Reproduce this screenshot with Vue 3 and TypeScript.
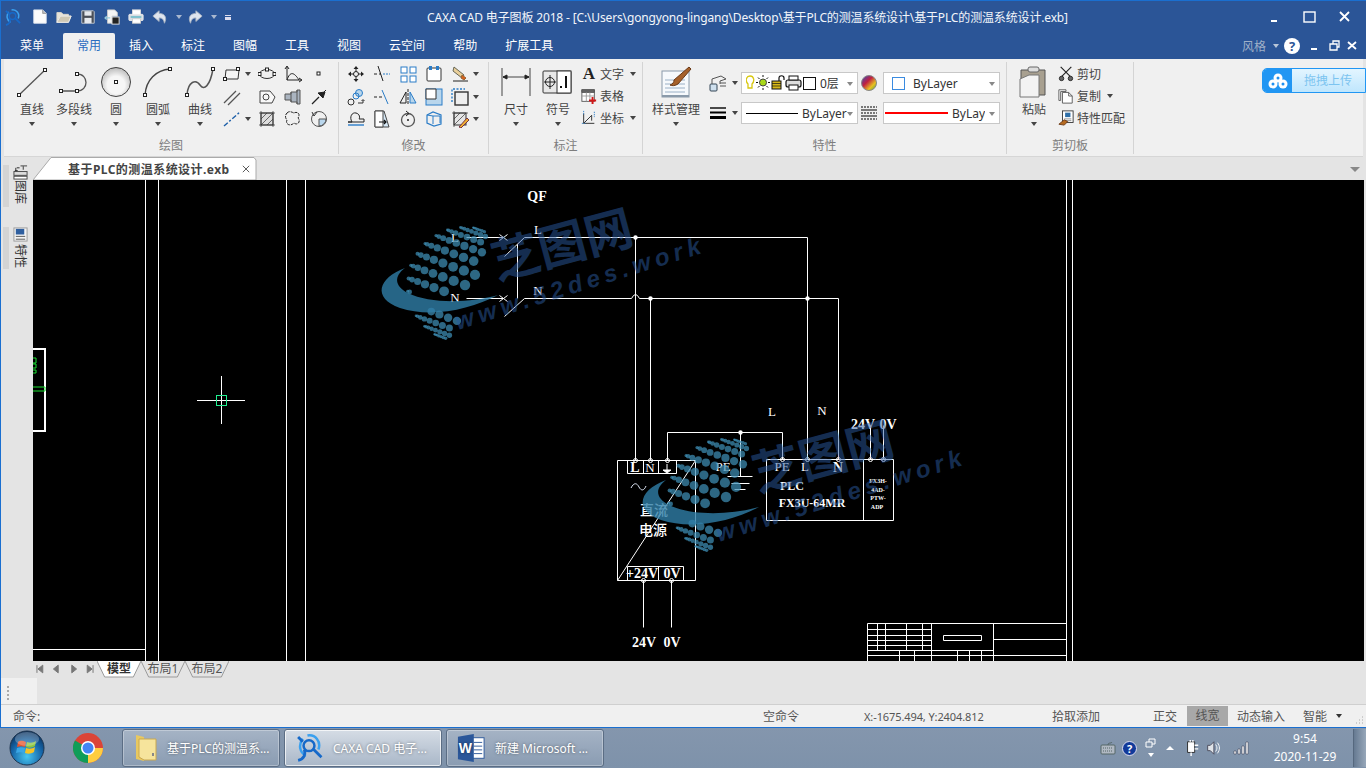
<script setup lang="ts">
const sq = (x: number, y: number) =>
  `<rect x="${x - 1.5}" y="${y - 1.5}" width="3" height="3" fill="#fff" stroke="#222"/>`

const icons: Record<string, string> = {
  // big drawing tools, 32 box
  line: `<path d="M3 29 29 4" stroke="#555" stroke-width="1.3"/>${sq(3, 29)}${sq(29, 4)}`,
  polyline: `<path d="M3 25H19C31 25 31 8 19 8" stroke="#555" stroke-width="1.3"/>${sq(3, 25)}${sq(19, 25)}${sq(19, 8)}`,
  circle: `<defs><radialGradient id="cg" cx=".5" cy=".6" r=".6"><stop offset=".5" stop-color="#f6f6f6"/><stop offset="1" stop-color="#b9b9b9"/></radialGradient></defs><circle cx="16" cy="16" r="14.5" fill="url(#cg)" stroke="#444"/>${sq(16, 16)}`,
  arc: `<path d="M3 29C4 14 14 4 28 3" stroke="#444" stroke-width="1.4"/>${sq(3, 29)}${sq(28, 3)}`,
  curve: `<path d="M3 29C4 15 12 13 16 19S26 20 29 3" stroke="#555" stroke-width="1.5"/>${sq(3, 29)}${sq(29, 3)}`,
  // draw small, 18 box
  rect: `<path d="M3 5H16L15 14H2Z" fill="#f4f4f4" stroke="#333"/>${sq(2, 14)}${sq(15, 4)}`,
  ellipse: `<ellipse cx="9" cy="9" rx="7.5" ry="4.5" stroke="#333"/>${sq(1.5, 9)}${sq(16.5, 9)}${sq(9, 4.5)}`,
  angle: `<path d="M3 2V15H17M3 15C6 6 10 7 15 15" stroke="#222"/><path d="M1 4 3 1 5 4M15 13 18 15 15 17" stroke="#222"/>`,
  point: `<rect x="7" y="7" width="3" height="3" stroke="#222" fill="#fff"/>`,
  parallel: `<path d="M1 15 13 3M5 17 17 5" stroke="#555" stroke-width="1.3"/>`,
  profile: `<path d="M2 3H12L17 9 14 15H2Z" stroke="#444" fill="#f8f8f8"/><circle cx="8" cy="9" r="3" stroke="#444"/>`,
  shaft: `<path d="M1 6H7V4H13V2H16V16H13V14H7V12H1Z" fill="#aab4c0" stroke="#555"/><path d="M13 2V16M7 4V14" stroke="#555"/>`,
  needle: `<path d="M2 16 9 9" stroke="#222" stroke-width="1.2"/><path d="M8 5 13 10 15 4ZM11 7 16 2" fill="#222" stroke="#222"/>`,
  center: `<path d="M1 16 17 2" stroke="#1d5fa8" stroke-width="1.4" stroke-dasharray="5 2 2 2"/>`,
  hatch: `<rect x="3" y="3" width="12" height="12" fill="#ddd" stroke="#333"/><path d="M3 9 9 3M3 15 15 3M9 15 15 9M1 3H17M1 15H17M3 1V17M15 1V17" stroke="#333" stroke-width=".7"/>`,
  cloud: `<path d="M3 3C6 0 9 3 10 3 13 1 17 4 14 8 17 11 14 16 10 13 6 17 1 14 3 10 1 8 1 5 3 3Z" stroke="#222" stroke-dasharray="3 1"/>`,
  rotate: `<circle cx="9" cy="9" r="7.5" stroke="#555"/><path d="M9 9V16A7 7 0 0 0 16 9Z" fill="#b9d6ec" stroke="#555"/><path d="M2 2 4 6 7 2" stroke="#333"/>`,
  // modify
  move: `<path d="M9 1 11.5 4H6.5ZM9 17 6.5 14H11.5ZM1 9 4 6.5V11.5ZM17 9 14 6.5V11.5Z" fill="#222" stroke="none"/><circle cx="9" cy="9" r="2.5" stroke="#222"/><path d="M9 4V6.5M9 11.5V14M4 9H6.5M11.5 9H14" stroke="#222"/>`,
  trim: `<path d="M5 1 10 16" stroke="#222"/><path d="M1 9H4M6 9H8" stroke="#222"/><path d="M10 9H17" stroke="#2a7cc7" stroke-dasharray="2 1"/>`,
  array: `<g stroke="#2a7cc7" fill="#fff"><rect x="2" y="2" width="6" height="6"/><rect x="11" y="2" width="6" height="6"/><rect x="2" y="11" width="6" height="6"/><rect x="11" y="11" width="6" height="6"/></g>`,
  stretch: `<rect x="2" y="3" width="14" height="13" rx="1" fill="#fff" stroke="#333"/><rect x="4" y="1" width="3" height="4" fill="#2a7cc7" stroke="none"/><rect x="11" y="1" width="3" height="4" fill="#2a7cc7" stroke="none"/>`,
  erase: `<path d="M2 16H17" stroke="#222"/><path d="M3 2 13 10 11 13 2 6Z" fill="#e9cf9a" stroke="#665"/><path d="M11 10 15 13 13 15 10 13Z" fill="#d9601a" stroke="#963"/>`,
  copyc: `<circle cx="12" cy="5" r="3.5" fill="#b9d6ec" stroke="#2a7cc7"/><circle cx="9" cy="8" r="3" stroke="#2a7cc7"/><circle cx="4" cy="14" r="3" stroke="#333"/><path d="M11 15H16V12M14.5 13 16 11.5 17.5 13" stroke="#333"/>`,
  extend: `<path d="M1 9H4M6 9H9" stroke="#222"/><path d="M9 2 15 16" stroke="#2a7cc7"/>`,
  mirror: `<path d="M9 1V17" stroke="#222" stroke-dasharray="3 1"/><path d="M7 4V15H1Z" stroke="#222"/><path d="M11 4V15H17Z" fill="#b9d6ec" stroke="#2a7cc7"/>`,
  fillet: `<rect x="1" y="1" width="16" height="16" fill="#b9d6ec" stroke="#2a7cc7"/><path d="M1 1H11V11H1Z" fill="#fff" stroke="#333"/>`,
  dashrect: `<rect x="4" y="4" width="13" height="13" fill="#eee" stroke="#333" stroke-width="1.4"/><path d="M1 14V1H14" stroke="#2a7cc7" stroke-width="1.4" stroke-dasharray="2 1.5"/>`,
  bump: `<path d="M1 12H5C2 7 5 2 9 3 13 4 13 8 12 9H17V12Z" stroke="#222"/><path d="M1 15H17" stroke="#2a7cc7" stroke-width="1.4"/>`,
  brk: `<path d="M2 1H11L16 17H2Z" fill="#d6e8f6" stroke="#444"/><path d="M2 1H10V17H2Z" fill="#fff" stroke="#444"/><path d="M6 12H13M11 10 13 12 11 14" stroke="#111" stroke-width="1.2"/>`,
  turn: `<circle cx="9" cy="10" r="6.5" stroke="#555" stroke-width="1.3"/><circle cx="9" cy="10" r="1" fill="#222"/><path d="M7 1 10 3.5 7 6" stroke="#222"/>`,
  box3d: `<path d="M2 5 8 2 16 5V14L9 16 2 13Z" stroke="#2a7cc7" stroke-width="1.2"/><path d="M8 6H15V13M8 6V14M2 5 8 6" stroke="#2a7cc7"/>`,
  hatchp: `<rect x="3" y="3" width="12" height="12" fill="#e5e5e5" stroke="#333"/><path d="M3 9 9 3M3 15 15 3M1 3H17M3 1V17" stroke="#333" stroke-width=".7"/><path d="M8 17 16 8 18 10 10 18Z" fill="#f0b030" stroke="#734"/>`,
  // annotation
  dim: `<path d="M2 2V30M30 2V30M3 11H29" stroke="#444"/><path d="M3 11 7 9V13ZM29 11 25 9V13Z" fill="#222" stroke="#222"/>`,
  symbol: `<rect x="1" y="5" width="28" height="22" rx="1" fill="#e8e8e8" stroke="#333"/><rect x="15" y="5" width="14" height="22" fill="#fff" stroke="#333"/><circle cx="8" cy="16" r="4.5" stroke="#222"/><path d="M8 9V23M2 16H14" stroke="#222"/><rect x="18" y="20" width="2" height="2" fill="#111" stroke="none"/><path d="M24 10V22" stroke="#111" stroke-width="2"/>`,
  table: `<rect x="1" y="2" width="14" height="13" fill="#fff" stroke="#555"/><path d="M1 2H15V5H1Z" fill="#666" stroke="#555"/><path d="M1 9H15M6 5V15M10 5V15" stroke="#999"/><path d="M9 14H17M13 10V18" stroke="#d01818" stroke-width="2.2"/>`,
  coord: `<path d="M3 4V15H15M3 15 12 6M12 6V12" stroke="#222"/><g stroke="#2a7cc7" stroke-dasharray="1.5 1"><path d="M3 1V6M15 2V8M1 15H5"/></g>`,
  // properties
  style: `<rect x="2" y="5" width="27" height="26" fill="#f6f9fc" stroke="#8a9aaa"/><path d="M5 14H25M5 18H25M5 22H25M5 26H25" stroke="#9ab0c6"/><path d="M2 30H29" stroke="#8a9aaa" stroke-width="2"/><path d="M14 14 29 1 31 3 18 18C15 20 12 20 10 19 13 18 14 16 14 14Z" fill="#a5602a" stroke="#6a3a18"/>`,
  layer: `<rect x="1" y="10" width="7" height="7" rx="1" fill="#cfe0ee" stroke="#345"/><path d="M3 10V5L12 2 17 5 11 7V10M11 9H17M11 12H17" stroke="#555"/>`,
  lwidth: `<path d="M1 4H17" stroke="#000" stroke-width="1.4"/><path d="M1 8.5H17" stroke="#000" stroke-width="2"/><path d="M1 13.5H17" stroke="#000" stroke-width="3"/>`,
  ltype: `<path d="M1 3H17M1 9H17M1 15H17" stroke="#000" stroke-dasharray="2 1"/><path d="M1 6H17M1 12H17" stroke="#000"/>`,
  colors: `<defs><linearGradient id="rb" x1="0" y1="0" x2="1" y2="1"><stop offset="0" stop-color="#3050c8"/><stop offset=".4" stop-color="#c02040"/><stop offset=".7" stop-color="#e8c020"/><stop offset="1" stop-color="#40a040"/></linearGradient></defs><circle cx="9" cy="9" r="7.5" fill="url(#rb)" stroke="#888"/>`,
  // clipboard
  paste: `<path d="M3 4H27V29H3Z" fill="#a8a090" stroke="#555"/><rect x="10" y="1" width="11" height="5" rx="2" fill="#ddd" stroke="#666"/><path d="M2 13 11 9H21V31H2Z" fill="#f3f3f3" stroke="#777"/>`,
  cut: `<path d="M3 1 14 12M15 1 4 12" stroke="#222" stroke-width="1.3"/><circle cx="4" cy="14" r="2.5" fill="#666" stroke="#222"/><circle cx="14" cy="14" r="2.5" fill="#666" stroke="#222"/>`,
  copy: `<path d="M1 2H9V4H3V14H1Z" fill="#fff" stroke="#555"/><path d="M5 5H12L16 9V17H5Z" fill="#fff" stroke="#555"/><path d="M12 5V9H16" stroke="#555"/>`,
  match: `<rect x="5" y="1" width="12" height="13" fill="#fff" stroke="#333"/><rect x="8" y="3" width="6" height="5" fill="#2f6fa8" stroke="none"/><path d="M7 10H15M7 12H15" stroke="#888"/><path d="M1 16 7 11 11 13 7 17Z" fill="#b56a20" stroke="#6a3a18"/>`,
  // quick access, 18 box
  qnew: `<path d="M2 1H12L16 5V16H2Z" fill="#fbfbfb" stroke="#dfe6ef"/><path d="M12 1V5H16" fill="#bbb" stroke="#999"/>`,
  qopen: `<path d="M1 15V4H6L8 6H14V8H5L1 15H14L17 8H14" fill="#e7e3d8" stroke="#dcd8cc"/><path d="M5 8H17L14 15H1Z" fill="#cfc8b4" stroke="#eee"/>`,
  qsave: `<path d="M2 2H15L16 3V16H2Z" fill="#4a4f58" stroke="#c9ced6"/><rect x="5" y="2.5" width="8" height="5" fill="#e6e9ee" stroke="none"/><rect x="5" y="10" width="8" height="6" fill="#e6e9ee" stroke="none"/>`,
  qsaveas: `<path d="M4 1H12L15 4V8H9V16H4Z" fill="#f4f4f4" stroke="#ccc"/><rect x="9" y="9" width="8" height="8" fill="#222" stroke="#eee"/><path d="M1 10H7M3 8 1 10 3 12" stroke="#9cd" stroke-width="1.2"/>`,
  qprint: `<rect x="5" y="1" width="9" height="6" fill="#fff" stroke="#ddd"/><rect x="1" y="6" width="16" height="7" rx="1" fill="#d8dde4" stroke="#eee"/><rect x="5" y="11" width="9" height="5" fill="#fff" stroke="#ccc"/><path d="M3 9H15" stroke="#3ab" stroke-width="1.2"/>`,
  qundo: `<path d="M8 2 1 8 8 14V10C11 10 13 11 14 16 17 10 15 5 8 5Z" fill="#dfe5ee" stroke="#a7b2c2"/>`,
  qredo: `<path d="M10 2 17 8 10 14V10C7 10 5 11 4 16 1 10 3 5 10 5Z" fill="#dfe5ee" stroke="#a7b2c2"/>`,
  caxa: `<path d="M5 3C2 7 3 12 7 14M8 1C13 0 17 5 15 10" stroke="#3aa0ef" stroke-width="1.6"/><circle cx="9" cy="7.500" r="3.500" stroke="#1669c9" stroke-width="1.600"/><path d="M2 2 5 5M12 10 17 15M2 17C6 16 7 13 6 10" stroke="#1669c9" stroke-width="1.800"/>`
}

const bigDraw = [
  { icon: 'line', label: '直线' },
  { icon: 'polyline', label: '多段线' },
  { icon: 'circle', label: '圆' },
  { icon: 'arc', label: '圆弧' },
  { icon: 'curve', label: '曲线' }
]
const drawGrid = [
  { icon: 'rect', caret: true }, { icon: 'ellipse' }, { icon: 'angle' }, { icon: 'point' },
  { icon: 'parallel', caret: false }, { icon: 'profile' }, { icon: 'shaft' }, { icon: 'needle' },
  { icon: 'center', caret: true }, { icon: 'hatch' }, { icon: 'cloud' }, { icon: 'rotate' }
]
const modifyGrid = [
  'move', 'trim', 'array', 'stretch', 'erase',
  'copyc', 'extend', 'mirror', 'fillet', 'dashrect',
  'bump', 'brk', 'turn', 'box3d', 'hatchp'
]
const tabs = ['插入', '标注', '图幅', '工具', '视图', '云空间', '帮助', '扩展工具']
const quick = ['qnew', 'qopen', 'qsave', 'qsaveas', 'qprint']

// two stamped watermarks; the second one is the first shifted
const stamps = [
  { x: 0, y: 0 },
  { x: 261, y: 212 }
]

// left half of a dotted sphere, dots grow towards its middle
interface Dot { x: number; y: number; r: number }
const globe: Dot[] = []
const rad = Math.PI / 180
const tilt = 20 * rad
for (let i = -6; i <= 6; i++) {
  const lat = i * 13 * rad
  for (let j = 0; j < 8; j++) {
    const lon = (-84 + j * 12 + (i % 2 ? 6 : 0)) * rad
    const x0 = 58 * Math.cos(lat) * Math.sin(lon)
    const y0 = 58 * Math.sin(lat)
    const x = 465 + x0 * Math.cos(tilt) - y0 * Math.sin(tilt)
    const y = 285 + x0 * Math.sin(tilt) + y0 * Math.cos(tilt)
    if (y > 292 && y < 311) continue
    if (y >= 311 && x > 458) continue
    const r = 0.8 + 4.4 * Math.cos(lat) * Math.cos(lon * 0.95)
    globe.push({ x: +x.toFixed(1), y: +y.toFixed(1), r: +r.toFixed(1) })
  }
}

// wire runs, all in screen coordinates
const wires = [
  'M466 237H503M466 298H503',
  'M504 256 524 237H807V459M504 316 524 298H631Q635 290 639 298H838V459',
  'M517 244V298M635 237V460M650 298V460',
  'M667 460V432H782V459M740 432V476M727 476H752M731 483H749M734 489H745',
  'M499 234 507 240M507 234 499 240M499 295 507 301M507 295 499 301',
  'M617 460H695V580H617ZM627 460V473H676V460M643 460V473M658 460V473M695 460 617 580',
  'M627 580V566H683V580M658 566V580M643 580V627M671 580V627',
  'M766 459H893V520H766ZM863 459V520M870 459V425M883 459V425'
]
const nodes = [[782, 459], [807, 459], [838, 459], [870, 459], [883, 459], [635, 460], [650, 460], [667, 460], [643, 580], [671, 580]]
const solid = [[635, 237], [650, 298], [807, 298], [740, 432]]
const titleLines = [
  'M867 623H1066V661M867 623V661M931 623V661M993 623V661',
  'M867 629H931M867 635H931M867 640H931M867 645H931M867 650H993M867 655H1066M993 639H1066',
  'M877 623V650M885 623V650M906 623V650M922 623V650M899 650V661M914 650V661M957 650V661M969 650V661M981 650V661',
  'M943 635H981V640H943Z'
]
</script>

<template>
  <div class="screen">
    <div class="window">
      <!-- title bar -->
      <div class="titlebar">
        <div class="quick">
          <svg class="q-app" viewBox="0 0 18 18" fill="none" v-html="icons.caxa"></svg>
          <svg v-for="q in quick" :key="q" class="q-ico" viewBox="0 0 18 18" fill="none" v-html="icons[q]"></svg>
          <svg class="q-ico" viewBox="0 0 18 18" fill="none" v-html="icons.qundo"></svg>
          <i class="caret pale q-caret"></i>
          <svg class="q-ico" viewBox="0 0 18 18" fill="none" v-html="icons.qredo"></svg>
          <i class="caret pale q-caret"></i>
          <span class="q-more"></span>
        </div>
        <div class="title">CAXA CAD 电子图板 2018 - [C:\Users\gongyong-lingang\Desktop\基于PLC的测温系统设计\基于PLC的测温系统设计.exb]</div>
        <div class="winctl">
          <svg viewBox="0 0 35 16"><path d="M14 12H20" stroke="#fff" stroke-width="2"/></svg>
          <svg viewBox="0 0 35 16"><rect x="12" y="3" width="11" height="10" fill="none" stroke="#fff" stroke-width="1.4"/></svg>
          <svg viewBox="0 0 35 16"><path d="M13 3 22 12M22 3 13 12" stroke="#fff" stroke-width="1.8"/></svg>
        </div>
      </div>

      <!-- ribbon tabs -->
      <div class="tabrow">
        <span class="tab first">菜单</span>
        <span class="tab active">常用</span>
        <span v-for="t in tabs" :key="t" class="tab">{{ t }}</span>
        <div class="tabright">
          <span class="style-lbl">风格</span>
          <i class="caret pale2"></i>
          <span class="help">?</span>
          <svg class="mdi" viewBox="0 0 58 14">
            <path d="M4 10H10" stroke="#fff" stroke-width="2"/>
            <path d="M23 5H30V11H23ZM26 5V2H32V8H30" fill="none" stroke="#fff" stroke-width="1.3"/>
            <path d="M41 3 49 10M49 3 41 10" stroke="#fff" stroke-width="1.8"/>
          </svg>
        </div>
      </div>

      <!-- ribbon -->
      <div class="ribbon-wrap">
        <div class="ribbon">
          <section class="group g-draw">
            <div class="g-body">
              <div v-for="b in bigDraw" :key="b.label" class="big">
                <svg class="ico32" viewBox="0 0 32 32" fill="none" v-html="icons[b.icon]"></svg>
                <span class="big-lbl">{{ b.label }}</span>
                <i class="caret"></i>
              </div>
              <div class="grid draw-grid">
                <div v-for="(c, i) in drawGrid" :key="i" class="cell">
                  <svg class="ico18" viewBox="0 0 18 18" fill="none" v-html="icons[c.icon]"></svg>
                  <i v-if="c.caret" class="caret cell-caret"></i>
                </div>
              </div>
            </div>
            <div class="g-name">绘图</div>
          </section>

          <section class="group g-modify">
            <div class="g-body">
              <div class="grid modify-grid">
                <div v-for="m in modifyGrid" :key="m" class="cell center">
                  <svg class="ico18" viewBox="0 0 18 18" fill="none" v-html="icons[m]"></svg>
                </div>
              </div>
              <div class="side-carets">
                <i class="caret"></i><i class="caret"></i><i class="caret"></i>
              </div>
            </div>
            <div class="g-name">修改</div>
          </section>

          <section class="group g-note">
            <div class="g-body">
              <div class="big">
                <svg class="ico32" viewBox="0 0 32 32" fill="none" v-html="icons.dim"></svg>
                <span class="big-lbl">尺寸</span>
                <i class="caret"></i>
              </div>
              <div class="big">
                <svg class="ico32" viewBox="0 0 32 32" fill="none" v-html="icons.symbol"></svg>
                <span class="big-lbl">符号</span>
                <i class="caret"></i>
              </div>
              <div class="mini-list">
                <div class="mini"><span class="glyph-a">A</span><span>文字</span><i class="caret"></i></div>
                <div class="mini"><svg class="ico16" viewBox="0 0 18 18" fill="none" v-html="icons.table"></svg><span>表格</span></div>
                <div class="mini"><svg class="ico16" viewBox="0 0 18 18" fill="none" v-html="icons.coord"></svg><span>坐标</span><i class="caret"></i></div>
              </div>
            </div>
            <div class="g-name">标注</div>
          </section>

          <section class="group g-prop">
            <div class="g-body">
              <div class="big big-style">
                <svg class="ico32" viewBox="0 0 32 32" fill="none" v-html="icons.style"></svg>
                <span class="big-lbl">样式管理</span>
                <i class="caret"></i>
              </div>
              <div class="prop-rows">
                <div class="prop-row">
                  <svg class="ico18" viewBox="0 0 18 18" fill="none" v-html="icons.layer"></svg>
                  <i class="caret"></i>
                  <div class="combo">
                    <svg class="layer-state" viewBox="0 0 56 16" fill="none">
                      <path d="M4 1C0 1-1 6 2 9V13H6V9C9 6 8 1 4 1Z" fill="#fff" stroke="#d8c810" stroke-width="1.300"/>
                      <circle cx="17" cy="7.500" r="3.500" fill="#a8d818" stroke="#444"/>
                      <path d="M17 0V2M17 13V15M10 7.500H12M22 7.500H24M12 2.500 13.500 4M22 2.500 20.500 4M12 12.500 13.500 11M22 12.500 20.500 11" stroke="#111"/>
                      <rect x="26" y="6" width="9" height="8" fill="#d8b818" stroke="#111"/>
                      <path d="M26 8.500H35M26 11H35" stroke="#111" stroke-width=".7"/>
                      <path d="M33 6V3C33 0 38 0 38 3V5" stroke="#111" stroke-width="1.200"/>
                      <rect x="40" y="5" width="15" height="7" rx="2" fill="#ddd" stroke="#111" stroke-width="1.200"/>
                      <rect x="43" y="1" width="9" height="4" fill="#fff" stroke="#111"/>
                      <rect x="43" y="10" width="9" height="5" fill="#fff" stroke="#111"/>
                    </svg>
                    <span class="layer-box"></span>
                    <span class="combo-txt">0层</span>
                    <i class="caret grey combo-caret"></i>
                  </div>
                  <svg class="ico18 prop-sw" viewBox="0 0 18 18" fill="none" v-html="icons.colors"></svg>
                  <div class="combo">
                    <span class="color-box"></span>
                    <span class="combo-txt bylayer">ByLayer</span>
                    <i class="caret grey combo-caret"></i>
                  </div>
                </div>
                <div class="prop-row">
                  <svg class="ico18" viewBox="0 0 18 18" fill="none" v-html="icons.lwidth"></svg>
                  <i class="caret"></i>
                  <div class="combo">
                    <span class="sample"></span>
                    <span class="combo-txt">ByLayer</span>
                    <i class="caret grey combo-caret"></i>
                  </div>
                  <svg class="ico18 prop-sw" viewBox="0 0 18 18" fill="none" v-html="icons.ltype"></svg>
                  <div class="combo">
                    <span class="sample red"></span>
                    <span class="combo-txt cut-off">ByLayer</span>
                    <i class="caret grey combo-caret"></i>
                  </div>
                </div>
              </div>
            </div>
            <div class="g-name">特性</div>
          </section>

          <section class="group g-clip">
            <div class="g-body">
              <div class="big">
                <svg class="ico32" viewBox="0 0 32 32" fill="none" v-html="icons.paste"></svg>
                <span class="big-lbl">粘贴</span>
                <i class="caret"></i>
              </div>
              <div class="mini-list clip-list">
                <div class="mini"><svg class="ico16" viewBox="0 0 18 18" fill="none" v-html="icons.cut"></svg><span>剪切</span></div>
                <div class="mini"><svg class="ico16" viewBox="0 0 18 18" fill="none" v-html="icons.copy"></svg><span>复制</span><i class="caret"></i></div>
                <div class="mini"><svg class="ico16" viewBox="0 0 18 18" fill="none" v-html="icons.match"></svg><span>特性匹配</span></div>
              </div>
            </div>
            <div class="g-name">剪切板</div>
          </section>

          <div class="upload">
            <div class="up-left">
              <svg viewBox="0 0 20 16">
                <circle cx="10" cy="5" r="4.500" fill="#fff"/>
                <circle cx="5" cy="11" r="4.500" fill="#fff"/>
                <circle cx="15" cy="11" r="4.500" fill="#fff"/>
                <circle cx="10" cy="5" r="1.500" fill="#1e90f0"/>
                <circle cx="5" cy="11" r="1.500" fill="#1e90f0"/>
                <circle cx="15" cy="11" r="1.500" fill="#1e90f0"/>
              </svg>
            </div>
            <span class="up-txt">拖拽上传</span>
          </div>
        </div>
      </div>

      <!-- sidebar + drawing area -->
      <div class="middle">
        <aside class="sidebar">
          <div class="dock">
            <i class="grip"></i>
            <div class="dock-in">
              <svg class="dock-ico" viewBox="0 0 16 16" fill="none">
                <path d="M2 6H5M4 3 7 3M3 6V3" stroke="#222"/>
                <path d="M8 1H15M11 1V5" stroke="#666" stroke-width="1.4"/>
                <rect x="1" y="7" width="14" height="4" fill="#ddd" stroke="#444"/>
                <rect x="1" y="12" width="14" height="3" fill="#fff" stroke="#444"/>
              </svg>
              <span class="dock-txt">图库</span>
            </div>
          </div>
          <div class="dock second">
            <i class="grip"></i>
            <div class="dock-in">
              <svg class="dock-ico" viewBox="0 0 16 16" fill="none">
                <rect x="1" y="1" width="14" height="14" fill="#f4f4f4" stroke="#999"/>
                <rect x="3" y="2" width="9" height="6" fill="#2f5f9f" stroke="none"/>
                <path d="M3 10H13M3 13H13" stroke="#555"/>
              </svg>
              <span class="dock-txt gap">特性</span>
            </div>
          </div>
        </aside>
        <div class="work">
          <div class="doctabs">
            <div class="doctab">
              <svg class="doctab-bg" viewBox="0 0 224 23" preserveAspectRatio="none">
                <path d="M0 23 18 .5H221L223 3V23Z" fill="#fff" stroke="#aaa"/>
              </svg>
              <span class="doctab-txt">基于PLC的测温系统设计.exb</span>
              <svg class="doctab-x" viewBox="0 0 10 10"><path d="M1 1 9 9M9 1 1 9" stroke="#555" stroke-width="1.2"/></svg>
            </div>
            <i class="doc-drop"></i>
          </div>
          <svg class="canvas" viewBox="33 180 1331 481">
            <rect x="33" y="180" width="1331" height="481" fill="#000"/>
            <g fill="none" stroke="#fff" stroke-width="1">
              <path d="M145.500 180V661M158.500 180V661M286.500 180V661M305.500 180V661M1066.500 180V661M1072.500 180V661M33 649.500H145"/>
              <path d="M33 349H45V431H33" stroke-width="2"/>
              <path d="M197 400.500H245M221.500 376V424"/>
              <path d="M33 358H36V363H33M33 364H36V368H33M33 370H36V373H33M33 387H45V391H33" stroke="#18e030"/>
              <rect x="216.500" y="395.500" width="10" height="10" stroke="#20f090"/>
              <path v-for="(d, i) in wires" :key="i" :d="d" transform="translate(.5 .5)"/>
              <path v-for="(d, i) in titleLines" :key="'t' + i" :d="d" transform="translate(.5 .5)"/>
              <circle v-for="(n, i) in nodes" :key="'n' + i" :cx="n[0] + 0.5" :cy="n[1] + 0.5" r="2"/>
            </g>
            <circle v-for="(n, i) in solid" :key="'s' + i" :cx="n[0] + 0.5" :cy="n[1] + 0.5" r="2.2" fill="#fff"/>
            <path d="M631 488C634 482 637 483 639 487 641 491 644 491 646 486" fill="none" stroke="#e0e8f8"/>

            <g class="cad-thin">
              <text x="455" y="242">L</text>
              <text x="455" y="302">N</text>
              <text x="538" y="234">L</text>
              <text x="538" y="295">N</text>
              <text x="772" y="416">L</text>
              <text x="822" y="415">N</text>
              <text x="723" y="471">PE</text>
              <text x="782" y="471">PE</text>
              <text x="805" y="471">L</text>
              <text x="650" y="472">N</text>
            </g>
            <g class="cad">
              <text x="537" y="201">QF</text>
              <text x="635" y="472">L</text>
              <text x="838" y="472">N</text>
              <text x="863" y="429">24V</text>
              <text x="888" y="429">0V</text>
              <text x="644" y="647">24V</text>
              <text x="672" y="647">0V</text>
              <text x="642" y="578">+24V</text>
              <text x="672" y="578">0V</text>
            </g>
            <g class="cad cad-sm">
              <text x="792" y="490">PLC</text>
              <text x="812" y="507">FX3U-64MR</text>
            </g>
            <path d="M667 464V470M663 470H671L667 473Z" stroke="#fff" fill="#fff"/>
            <g class="cad-cn">
              <text x="654" y="515">直流</text>
              <text x="653" y="535">电源</text>
            </g>
            <g class="cad-tiny">
              <text x="878" y="483">FX3H-</text>
              <text x="878" y="492">4AD-</text>
              <text x="878" y="500">PTW-</text>
              <text x="877" y="509">ADP</text>
            </g>

            <g v-for="(s, i) in stamps" :key="'w' + i" :transform="`translate(${s.x} ${s.y})`">
              <circle v-for="(d, k) in globe" :key="k" :cx="d.x" :cy="d.y" :r="d.r" class="wm-dot"/>
              <path class="wm-orbit" d="M405 268C378 278 372 298 400 308 430 318 470 310 498 295 470 303 430 304 408 293 394 286 394 276 405 268Z"/>
              <text class="wm-cn" x="497" y="280" transform="rotate(-15 497 280)">芝图网</text>
              <text class="wm-url" x="458" y="330" textLength="256" lengthAdjust="spacing" transform="rotate(-17.500 458 330)">www.52des.work</text>
            </g>
          </svg>
        </div>
      </div>

      <!-- layout tabs and command strip -->
      <div class="lower">
        <div class="layoutbar">
          <svg class="navs" viewBox="0 0 60 10">
            <path d="M1 1V9M7 1 2 5 7 9ZM23 1 18 5 23 9ZM37 1 42 5 37 9ZM53 1 58 5 53 9ZM59 1V9" fill="#777" stroke="#777"/>
          </svg>
          <div class="ltab on">
            <svg viewBox="0 0 46 17" preserveAspectRatio="none"><path d="M0 0 8 16H38L46 0" fill="#fff" stroke="#999"/></svg>
            <span>模型</span>
          </div>
          <div class="ltab">
            <svg viewBox="0 0 46 17" preserveAspectRatio="none"><path d="M0 0 8 16H38L46 0" fill="#e4e4e4" stroke="#999"/></svg>
            <span>布局1</span>
          </div>
          <div class="ltab">
            <svg viewBox="0 0 46 17" preserveAspectRatio="none"><path d="M0 0 8 16H38L46 0" fill="#e4e4e4" stroke="#999"/></svg>
            <span>布局2</span>
          </div>
        </div>
        <div class="cmdgrip"><i></i><i></i><i></i><i></i></div>
      </div>

      <!-- status bar -->
      <div class="status">
        <span class="s-cmd">命令:</span>
        <span class="s-idle">空命令</span>
        <span class="s-xy">X:-1675.494, Y:2404.812</span>
        <span class="s-pick">拾取添加</span>
        <span class="s-ortho">正交</span>
        <span class="s-lw">线宽</span>
        <span class="s-dyn">动态输入</span>
        <span class="s-smart">智能</span>
        <i class="caret dark"></i>
        <svg class="s-grip" viewBox="0 0 8 8"><path d="M6 1H7M6 4H7M3 4H4M6 7H7M3 7H4M0 7H1" stroke="#aaa"/></svg>
      </div>
    </div>

    <!-- Windows taskbar -->
    <footer class="taskbar">
      <svg class="orb" viewBox="0 0 36 36">
        <defs>
          <radialGradient id="orbg" cx=".5" cy=".75" r=".75">
            <stop offset="0" stop-color="#47c6f0"/>
            <stop offset=".6" stop-color="#1565a8"/>
            <stop offset="1" stop-color="#0b2c55"/>
          </radialGradient>
        </defs>
        <circle cx="18" cy="18" r="17" fill="url(#orbg)" stroke="#1d3550"/>
        <path d="M9 12C12 10 14 11 17 12L16 17C13 16 11 16 8 17Z" fill="#e8532a"/>
        <path d="M18 12C21 13 24 13 27 11L26 16C23 18 20 18 17 17Z" fill="#8cc63f"/>
        <path d="M8 18C11 17 13 17 16 18L15 23C12 22 10 22 7 23Z" fill="#3ba7e6"/>
        <path d="M17 18C20 19 23 19 26 17L25 22C22 24 19 24 16 23Z" fill="#f6c324"/>
        <ellipse cx="18" cy="9" rx="12" ry="7" fill="#fff" opacity=".25"/>
      </svg>
      <svg class="chrome" viewBox="0 0 30 30">
        <circle cx="15" cy="15" r="15" fill="#db4437"/>
        <path d="M15 15 2 7.500A15 15 0 0 0 15 30L22.500 17Z" fill="#0f9d58"/>
        <path d="M15 15H30A15 15 0 0 1 15 30Z" fill="#ffcd40"/>
        <circle cx="15" cy="15" r="7" fill="#fff"/>
        <circle cx="15" cy="15" r="5.500" fill="#4285f4"/>
      </svg>
      <div class="task t1">
        <svg class="task-ico" viewBox="0 0 24 30">
          <path d="M3 2 11 4V28L3 26Z" fill="#e8c860"/>
          <path d="M6 6H23V27H11L6 24Z" fill="#f6e49c" stroke="#c9a850"/>
          <rect x="19" y="20" width="2" height="3" fill="#888"/>
        </svg>
        <span>基于PLC的测温系...</span>
      </div>
      <div class="task t2 current">
        <svg class="task-ico wide" viewBox="0 0 18 18" fill="none" v-html="icons.caxa"></svg>
        <span>CAXA CAD 电子...</span>
      </div>
      <div class="task t3">
        <svg class="task-ico wide" viewBox="0 0 30 30">
          <rect x="11" y="4" width="18" height="22" fill="#fff" stroke="#2b579a"/>
          <path d="M18 9H27M18 13H27M18 17H27M18 21H27" stroke="#2b579a"/>
          <path d="M1 3 18 0V30L1 27Z" fill="#2b579a"/>
          <text class="word-w" x="9" y="20">W</text>
        </svg>
        <span>新建 Microsoft ...</span>
      </div>
      <div class="tray">
        <svg class="tray-ico" viewBox="0 0 16 14"><rect x="1" y="4" width="14" height="9" rx="1" fill="#b0b8c2" stroke="#566"/><path d="M3 7H13M3 10H13" stroke="#566" stroke-dasharray="1 1"/><path d="M8 4C8 1 11 3 12 1" fill="none" stroke="#566"/></svg>
        <span class="tray-help">?</span>
        <svg class="tray-small" viewBox="0 0 12 20"><path d="M1 4H7V9H1ZM4 4V1H10V6H7" fill="none" stroke="#fff"/><path d="M3 15H9L6 19Z" fill="#fff"/></svg>
        <i class="tray-up"></i>
        <svg class="tray-ico" viewBox="0 0 16 18"><path d="M3 2H11V14H3Z" fill="#fff" stroke="#222"/><path d="M6 2V0M9 2V0M11 6H15M11 10H15M7 14V18" stroke="#fff" stroke-width="1.6"/></svg>
        <svg class="tray-ico spk" viewBox="0 0 16 18"><path d="M2 6H5L9 2V16L5 12H2Z" fill="#dfe3e8" stroke="#445"/><path d="M11 5C13 8 13 10 11 13M13 3C16 7 16 11 13 15" fill="none" stroke="#fff"/></svg>
        <svg class="tray-ico sig" viewBox="0 0 16 14"><path d="M1 10H3V13H1ZM5 8H7V13H5ZM9 5H11V13H9ZM13 1H15V13H13Z" fill="#fff" stroke="#334" stroke-width=".5"/></svg>
        <div class="clock">
          <span>9:54</span>
          <span>2020-11-29</span>
        </div>
        <i class="show-desk"></i>
      </div>
    </footer>
  </div>
</template>

<style>
html,
body {
  margin: 0;
  padding: 0;
  overflow: hidden;
}
</style>

<style scoped>
.screen {
  width: 1366px;
  height: 768px;
  display: flex;
  flex-direction: column;
  overflow: hidden;
  position: relative;
  font-family: "Noto Sans", "Noto Sans CJK SC", sans-serif;
  font-size: 12px;
  color: #444;
  background: #e4e4e4;
}

.window {
  flex: none;
  height: 728px;
  box-sizing: border-box;
  display: flex;
  flex-direction: column;
  border-left: 1px solid #1a6fd0;
  border-top: 1px solid #1a6fd0;
  border-bottom: 1px solid #1a6fd0;
}

.caret {
  display: inline-block;
  width: 0;
  height: 0;
  border-left: 3.5px solid transparent;
  border-right: 3.5px solid transparent;
  border-top: 4px solid #444;
  flex: none;
}
.caret.pale { border-top-color: #a9b8cf; }
.caret.pale2 { border-top-color: #b9c6d8; }
.caret.grey { border-top-color: #888; }
.caret.dark { border-top-color: #333; margin-left: 8px; }

/* title bar */
.titlebar {
  height: 32px;
  flex: none;
  display: flex;
  align-items: center;
  background: #2b5597;
  color: #fff;
}
.quick {
  width: 426px;
  flex: none;
  display: flex;
  align-items: center;
  box-sizing: border-box;
  padding-left: 3px;
}
.q-app { width: 17px; height: 17px; margin-right: 11px; }
.q-ico { width: 16px; height: 16px; margin-right: 8px; }
.q-caret { margin: 0 5px 0 0; border-left-width: 3px; border-right-width: 3px; }
.q-more {
  width: 6px;
  height: 1px;
  margin-left: 3px;
  border-top: 1px solid #dde;
  border-bottom: 3px solid #dde;
}
.title {
  flex: 1;
  white-space: nowrap;
  font-size: 12px;
  letter-spacing: -0.15px;
  color: #f2f5fa;
}
.winctl {
  display: flex;
  flex: none;
  margin-right: 4px;
}
.winctl svg { width: 35px; height: 16px; }

/* ribbon tabs */
.tabrow {
  height: 26px;
  flex: none;
  display: flex;
  background: #2b5597;
  padding-left: 5px;
}
.tab {
  padding: 0 14px;
  line-height: 26px;
  color: #fff;
  white-space: nowrap;
}
.tab.first { margin-right: 5px; }
.tab.active {
  background: #f0f0f0;
  color: #2b6cc0;
  border-radius: 2px 2px 0 0;
}
.tabright {
  margin-left: auto;
  display: flex;
  align-items: center;
  margin-right: 1px;
}
.style-lbl { color: #9fb0c8; margin-right: 7px; font-size: 12px; }
.help {
  width: 16px;
  height: 16px;
  margin-left: 5px;
  border-radius: 50%;
  background: #fff;
  color: #2b5597;
  font-weight: 700;
  font-size: 13px;
  line-height: 16px;
  text-align: center;
}
.mdi { width: 58px; height: 14px; margin-left: 7px; }

/* ribbon */
.ribbon-wrap {
  flex: none;
  height: 98px;
  padding: 0 3px;
  background: #e4e4e4;
}
.ribbon {
  position: relative;
  height: 97px;
  display: flex;
  background: #f0f0f0;
  border-bottom: 1px solid #d6d6d6;
}
.group {
  flex: none;
  box-sizing: border-box;
  height: 92px;
  margin-top: 3px;
  border-right: 1px solid #d4d4d4;
  display: flex;
  flex-direction: column;
}
.g-draw { width: 335px; }
.g-modify { width: 150px; }
.g-note { width: 154px; }
.g-prop { width: 364px; }
.g-clip { width: 127px; }
.g-body {
  flex: 1;
  display: flex;
  min-height: 0;
}
.g-draw .g-body { padding-left: 7px; }
.g-note .g-body { padding-left: 6px; }
.g-clip .g-body { padding-left: 6px; }
.g-name {
  text-align: center;
  color: #7d7d7d;
  line-height: 18px;
  height: 17px;
}
.big {
  width: 42px;
  flex: none;
  display: flex;
  flex-direction: column;
  align-items: center;
  padding-top: 4px;
}
.ico32 { width: 32px; height: 32px; flex: none; }
.ico18 { width: 18px; height: 18px; flex: none; }
.ico16 { width: 16px; height: 16px; flex: none; }
.big-lbl {
  line-height: 18px;
  margin-top: 3px;
  white-space: nowrap;
}
.big .caret { margin-top: 3px; }
.big-style { width: 66px; }

.grid { display: grid; grid-template-rows: 22px 23px 22px; padding-top: 1px; }
.draw-grid { grid-template-columns: 31px 26px 26px 26px; margin-left: 2px; }
.modify-grid { grid-template-columns: repeat(5, 26px); padding-left: 4px; }
.cell { display: flex; align-items: center; }
.cell.center { justify-content: center; }
.draw-grid .cell { justify-content: center; }
.draw-grid .cell:nth-child(4n + 1) { justify-content: flex-start; }
.cell-caret { margin-left: 4px; }
.side-carets {
  display: grid;
  grid-template-rows: 22px 23px 22px;
  align-items: center;
  padding-top: 1px;
}

.mini-list {
  display: grid;
  grid-template-rows: 22px 22px 22px;
  padding-top: 1px;
  margin-left: 2px;
}
.mini {
  display: flex;
  align-items: center;
  gap: 3px;
  white-space: nowrap;
}
.mini .caret { margin-left: 3px; }
.glyph-a {
  width: 16px;
  text-align: center;
  font-family: "Liberation Serif", serif;
  font-weight: 700;
  font-size: 17px;
  color: #222;
}
.clip-list { margin-left: 3px; }

.prop-rows {
  display: flex;
  flex-direction: column;
  gap: 8px;
  padding-top: 10px;
}
.prop-row {
  display: flex;
  align-items: center;
  height: 22px;
}
.prop-row > .caret { margin: 0 3px 0 5px; }
.prop-sw { margin: 0 5px 0 2px; }
.combo {
  width: 117px;
  height: 22px;
  box-sizing: border-box;
  background: #fff;
  border: 1px solid #c8c8c8;
  display: flex;
  align-items: center;
  position: relative;
  padding-left: 4px;
  overflow: hidden;
  color: #333;
}
.combo-caret { position: absolute; right: 4px; top: 9px; }
.combo-txt { white-space: nowrap; }
.layer-state { width: 56px; height: 16px; flex: none; }
.layer-box {
  width: 11px;
  height: 11px;
  border: 1px solid #111;
  margin: 0 4px 0 1px;
  flex: none;
}
.color-box {
  width: 11px;
  height: 11px;
  margin-left: 4px;
  border: 1px solid #3a8be0;
  flex: none;
}
.bylayer { margin-left: 8px; }
.sample {
  width: 52px;
  height: 0;
  border-top: 1px solid #000;
  margin: 0 4px 0 0;
  flex: none;
}
.sample.red { border-top: 2px solid #ff0000; width: 63px; margin-left: -3px; }
.cut-off { width: 33px; overflow: hidden; }

/* upload widget floats over the ribbon */
.upload {
  position: absolute;
  left: 1258px;
  top: 9px;
  width: 104px;
  height: 25px;
  display: flex;
  box-sizing: border-box;
  border: 1px solid #2196f3;
  border-radius: 5px 0 0 5px;
  overflow: hidden;
  background: linear-gradient(#e3f5ff, #bfe6fd);
}
.up-left {
  width: 29px;
  background: #2196f3;
  display: flex;
  align-items: center;
  justify-content: center;
  flex: none;
}
.up-left svg { width: 20px; height: 16px; }
.up-txt {
  padding-left: 12px;
  line-height: 23px;
  color: #7cc4f0;
  white-space: nowrap;
}

/* middle */
.middle {
  flex: 1;
  min-height: 0;
  display: flex;
}
.sidebar {
  width: 32px;
  flex: none;
  padding-top: 8px;
  background: #e4e4e4;
  box-sizing: border-box;
}
.dock {
  display: flex;
  height: 42px;
}
.dock.second { margin-top: 20px; }
.grip {
  width: 6px;
  margin-left: 2px;
  background: #d4d4d4;
  flex: none;
}
.dock-in {
  margin-left: 4px;
  display: flex;
  flex-direction: column;
  align-items: center;
}
.dock-ico { width: 15px; height: 15px; flex: none; }
.dock-txt {
  writing-mode: vertical-rl;
  text-orientation: sideways;
  line-height: 15px;
  color: #333;
}
.dock-txt.gap { margin-top: 2px; }
.work {
  flex: 1;
  min-width: 0;
  display: flex;
  flex-direction: column;
}
.doctabs {
  height: 23px;
  flex: none;
  display: flex;
  position: relative;
  background: #e4e4e4;
}
.doctab {
  position: relative;
  width: 224px;
  height: 23px;
  display: flex;
  align-items: center;
}
.doctab-bg {
  position: absolute;
  inset: 0;
  width: 100%;
  height: 100%;
}
.doctab-txt {
  position: relative;
  margin-left: 35px;
  font-weight: 700;
  letter-spacing: 0.45px;
  color: #444;
  white-space: nowrap;
}
.doctab-x {
  position: absolute;
  left: 209px;
  top: 8px;
  width: 8px;
  height: 8px;
}
.doc-drop {
  position: absolute;
  right: 6px;
  top: 10px;
  width: 0;
  height: 0;
  border-left: 5px solid transparent;
  border-right: 5px solid transparent;
  border-top: 5px solid #888;
}
.canvas {
  display: block;
  width: 1331px;
  height: 481px;
  flex: none;
}
.cad text,
.cad-thin text,
.cad-tiny text,
.cad-cn text {
  text-anchor: middle;
}
.cad text {
  font-family: "Liberation Serif", serif;
  font-weight: 700;
  font-size: 14px;
  fill: #fff;
}
.cad-sm text { font-size: 12px; }
.cad-thin text {
  font-family: "Liberation Serif", serif;
  font-size: 13px;
  fill: #fff;
}
.cad-cn text {
  font-family: "Noto Sans CJK SC", sans-serif;
  font-weight: 500;
  font-size: 14px;
  fill: #fff;
}
.cad-tiny text {
  font-family: "Liberation Serif", serif;
  font-weight: 700;
  font-size: 6px;
  fill: #fff;
}
.wm-dot { fill: #3f8fb5; opacity: 0.72; }
.wm-orbit { fill: #2f7ea8; opacity: 0.8; }
.wm-cn {
  font-family: "Noto Sans CJK SC", sans-serif;
  font-weight: 700;
  font-size: 48px;
  fill: #2a5a9f;
  opacity: 0.5;
}
.wm-url {
  font-family: "Liberation Sans", sans-serif;
  font-weight: 700;
  font-style: italic;
  font-size: 24px;
  fill: #2a5a9f;
  opacity: 0.5;
}

/* layout tabs */
.lower {
  flex: none;
  height: 44px;
  box-sizing: border-box;
  border-bottom: 1px solid #cfcfcf;
  background: #e4e4e4;
}
.layoutbar {
  height: 17px;
  display: flex;
  align-items: flex-start;
  padding-left: 35px;
}
.navs { width: 58px; height: 10px; margin: 3px 0 0; flex: none; }
.ltab {
  position: relative;
  width: 44px;
  height: 17px;
  line-height: 15px;
  text-align: center;
  color: #555;
}
.ltab.on { margin-left: 3px; font-weight: 700; color: #333; }
.ltab svg {
  position: absolute;
  inset: 0;
  width: 100%;
  height: 100%;
}
.ltab span { position: relative; }
.cmdgrip {
  width: 36px;
  height: 26px;
  box-sizing: border-box;
  background: #f0f0f0;
  padding: 8px 0 0 6px;
  display: flex;
  flex-direction: column;
  gap: 2px;
}
.cmdgrip i {
  width: 2px;
  height: 2px;
  background: #aaa;
}

/* status bar */
.status {
  flex: none;
  height: 22px;
  display: flex;
  align-items: center;
  background: #f0f0f0;
  color: #555;
  white-space: nowrap;
  padding-left: 12px;
}
.s-cmd { width: 750px; }
.s-idle { width: 101px; }
.s-xy { width: 188px; font-size: 11px; letter-spacing: -0.1px; }
.s-pick { width: 101px; }
.s-ortho { width: 34px; }
.s-lw {
  width: 41px;
  height: 20px;
  line-height: 20px;
  text-align: center;
  background: #a8a8a8;
  margin-right: 9px;
}
.s-dyn { width: 66px; }
.s-smart { width: 25px; }
.s-grip { width: 8px; height: 8px; margin-left: 14px; margin-top: 8px; }

/* taskbar */
.taskbar {
  flex: 1;
  display: flex;
  align-items: center;
  background: linear-gradient(#8496ad, #7e92aa);
  color: #fff;
}
.orb { width: 36px; height: 36px; margin-left: 9px; flex: none; }
.chrome { width: 30px; height: 30px; margin-left: 28px; flex: none; }
.task {
  width: 158px;
  height: 38px;
  box-sizing: border-box;
  flex: none;
  display: flex;
  align-items: center;
  gap: 10px;
  padding-left: 10px;
  margin-right: 4px;
  border: 1px solid #5b6d84;
  border-radius: 3px;
  background: linear-gradient(#a5b3c5, #8a9cb2);
  box-shadow: inset 0 0 0 1px rgba(255, 255, 255, 0.3);
  white-space: nowrap;
  text-shadow: 0 0 3px rgba(0, 0, 0, 0.5);
}
.t1 { margin-left: 19px; }
.task.current {
  background: linear-gradient(#d5dce5, #a9b7c8);
  box-shadow: inset 0 0 0 1px rgba(255, 255, 255, 0.7);
}
.task-ico { width: 24px; height: 30px; flex: none; }
.task-ico.wide { width: 28px; height: 28px; }
.word-w {
  font-family: "Liberation Sans", sans-serif;
  font-weight: 700;
  font-size: 15px;
  fill: #fff;
  text-anchor: middle;
}
.tray {
  margin-left: auto;
  height: 100%;
  display: flex;
  align-items: center;
}
.tray-ico { width: 16px; height: 16px; margin-right: 5px; flex: none; }
.tray-help {
  width: 15px;
  height: 15px;
  margin: 0 8px 0 1px;
  border-radius: 50%;
  background: #123a9a;
  border: 1px solid #dde;
  box-sizing: border-box;
  text-align: center;
  line-height: 13px;
  font-weight: 700;
  font-size: 11px;
}
.tray-small { width: 12px; height: 20px; margin-right: 9px; }
.tray-up {
  width: 0;
  height: 0;
  border-left: 4px solid transparent;
  border-right: 4px solid transparent;
  border-bottom: 4px solid #fff;
  margin-right: 10px;
}
.tray-ico.sig { margin-left: 7px; }
.clock {
  display: flex;
  flex-direction: column;
  align-items: center;
  width: 72px;
  margin-left: 15px;
  font-size: 12px;
  line-height: 18px;
}
.show-desk {
  width: 13px;
  height: 38px;
  margin-left: 12px;
  box-sizing: border-box;
  background: linear-gradient(90deg, #667a92, #98a8ba);
  border-left: 1px solid #56687e;
}
</style>
